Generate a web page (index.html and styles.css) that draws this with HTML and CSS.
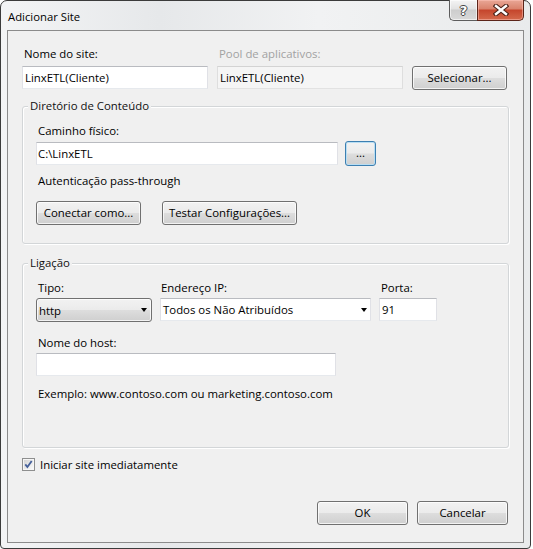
FILE: index.html
```html
<!DOCTYPE html>
<html lang="pt">
<head>
<meta charset="utf-8">
<title>Adicionar Site</title>
<link rel="stylesheet" href="styles.css">
</head>
<body>
<div class="window">
  <div class="titlebar">
    <div class="title">Adicionar Site</div>
    <div class="caption-buttons">
      <div class="cap-btn help"><span class="help-glyph">?</span></div>
      <div class="cap-btn close">
        <svg width="16" height="12" viewBox="0 0 16 12">
          <path d="M3 2 L13 10 M13 2 L3 10" stroke="#4a2118" stroke-width="4.6" stroke-linecap="square" fill="none"/>
          <path d="M3 2 L13 10 M13 2 L3 10" stroke="#ffffff" stroke-width="2.4" stroke-linecap="square" fill="none"/>
        </svg>
      </div>
    </div>
  </div>
  <div class="client">
    <div class="top-grid">
      <div class="lbl">Nome do site:</div>
      <div class="lbl disabled">Pool de aplicativos:</div>
      <div></div>
      <div class="input">LinxETL(Cliente)</div>
      <div class="input readonly">LinxETL(Cliente)</div>
      <div class="btn">Selecionar...</div>
    </div>

    <div class="group g1">
      <div class="group-title">Diretório de Conteúdo</div>
      <div class="lbl l-path">Caminho físico:</div>
      <div class="path-row">
        <div class="input path">C:\LinxETL</div>
        <div class="btn btn-focus browse">...</div>
      </div>
      <div class="lbl auth">Autenticação pass-through</div>
      <div class="btn-row">
        <div class="btn b-conn">Conectar como...</div>
        <div class="btn b-test">Testar Configurações...</div>
      </div>
    </div>

    <div class="group g2">
      <div class="group-title">Ligação</div>
      <div class="ip-grid">
        <div class="lbl">Tipo:</div>
        <div class="lbl lbl-ip">Endereço IP:</div>
        <div class="lbl">Porta:</div>
        <div class="select"><span>http</span><span class="arrow"></span></div>
        <div class="combo"><span>Todos os Não Atribuídos</span><span class="arrow"></span></div>
        <div class="input port">91</div>
      </div>
      <div class="lbl host-label">Nome do host:</div>
      <div class="input host"></div>
      <div class="lbl example">Exemplo: www.contoso.com ou marketing.contoso.com</div>
    </div>

    <div class="check-row">
      <svg class="checkbox" width="13" height="13" viewBox="0 0 13 13">
        <defs>
          <linearGradient id="cbg" x1="0" y1="0" x2="1" y2="1">
            <stop offset="0" stop-color="#d4d4d4"/>
            <stop offset="1" stop-color="#fafafa"/>
          </linearGradient>
        </defs>
        <rect x="0.5" y="0.5" width="12" height="12" fill="#f6f6f6" stroke="#8e8f8f"/>
        <rect x="2" y="2" width="9" height="9" fill="url(#cbg)"/>
        <path d="M3.3 6.4 L5.4 9.1 L9.7 3.1" fill="none" stroke="#45609a" stroke-width="1.8"/>
      </svg>
      <span class="lbl check-label">Iniciar site imediatamente</span>
    </div>

    <div class="footer">
      <div class="btn b-foot">OK</div>
      <div class="btn b-foot">Cancelar</div>
    </div>
  </div>
</div>
</body>
</html>
```

FILE: styles.css
```css
* { box-sizing: border-box; }
html, body { margin: 0; padding: 0; }
body {
  width: 533px;
  height: 549px;
  overflow: hidden;
  background: #ffffff;
  font-family: "Open Sans", "Noto Sans", sans-serif;
  font-size: 11.4px;
  color: #000;
}

.window {
  width: 531px;
  height: 549px;
  border: 1px solid #3b3b3b;
  border-radius: 7px 7px 4px 4px;
  background: linear-gradient(90deg, #f3f4f5 0%, #e6e8ea 30%, #f1f2f3 60%, #e9ebec 100%);
  display: flex;
  flex-direction: column;
}

.titlebar {
  height: 29px;
  flex: none;
  display: flex;
  align-items: flex-start;
}
.title {
  margin: 8px 0 0 7px;
  line-height: 15px;
  font-size: 11.3px;
  color: #000;
}
.caption-buttons {
  margin-left: auto;
  margin-right: 6px;
  margin-top: -1px;
  display: flex;
}
.cap-btn {
  height: 21px;
  display: flex;
  align-items: center;
  justify-content: center;
}
.help {
  width: 28px;
  border: 1px solid #5d5d5d;
  border-top: none;
  border-right: none;
  border-radius: 0 0 0 5px;
  background: linear-gradient(#f4f4f4 0%, #e2e2e2 45%, #cdcdcd 50%, #d9d9d9 100%);
  box-shadow: inset 0 0 0 1px rgba(255,255,255,0.6);
}
.help-glyph {
  font-family: "DejaVu Sans", sans-serif;
  font-weight: bold;
  font-size: 13px;
  line-height: 13px;
  color: #fff;
  text-shadow: 1px 0 0 #444, -1px 0 0 #444, 0 1px 0 #444, 0 -1px 0 #444;
}
.close {
  width: 47px;
  border: 1px solid #5b2419;
  border-top: none;
  border-radius: 0 0 5px 0;
  background: linear-gradient(#e9a796 0%, #d9826c 45%, #c5452c 50%, #d4694c 100%);
  box-shadow: inset 0 0 0 1px rgba(255,200,190,0.5);
}

.client {
  margin: 0 6px;
  height: 513px;
  flex: none;
  border: 1px solid #8b8b8b;
  background: #f0f0f0;
  padding: 15px 14px 0 14px;
}

.lbl {
  line-height: 15px;
  padding-left: 2px;
  color: #000;
  white-space: nowrap;
}
.lbl.disabled { color: #a2a2a2; }

.top-grid {
  display: grid;
  grid-template-columns: 186px 186px 95px;
  column-gap: 9px;
  row-gap: 5px;
  align-items: start;
}

.input {
  height: 23px;
  border: 1px solid;
  border-color: #b9bbc0 #e0e1e6 #e6e9ed #e0e1e6;
  background: #fff;
  padding-left: 2px;
  line-height: 21px;
  white-space: nowrap;
}
.input.readonly {
  background: #f5f5f5;
  border-color: #d3d3d3 #dedede #e2e2e2 #dedede;
}

.btn {
  height: 24px;
  border: 1px solid #707070;
  border-radius: 3px;
  background: linear-gradient(#f2f2f2 0%, #ebebeb 48%, #dddddd 52%, #cfcfcf 100%);
  box-shadow: inset 0 0 0 1px rgba(255,255,255,0.75);
  text-align: center;
  line-height: 22px;
  white-space: nowrap;
}
.btn-focus {
  border-color: #3c7fb1;
  box-shadow: inset 0 0 0 1px #b9def3;
}

.group {
  border: 1px solid #d3d6d8;
  border-radius: 3px;
  box-shadow: inset 1px 1px 0 #fff, 1px 1px 0 #fff;
  padding: 0 13px;
}
.group-title {
  width: max-content;
  margin: -9px 0 0 -8px;
  padding: 0 2px;
  background: #f0f0f0;
  line-height: 16px;
  color: #111;
}

.g1 { margin-top: 16px; padding-bottom: 18px; }
.l-path { margin-top: 9px; }
.path-row {
  margin-top: 3px;
  height: 25px;
  display: flex;
  align-items: center;
  gap: 7px;
}
.input.path { width: 302px; padding-left: 1px; }
.browse { width: 31px; height: 25px; line-height: 21px; }
.auth { margin-top: 7px; }
.btn-row {
  margin-top: 13px;
  display: flex;
  gap: 21px;
}
.b-conn { width: 105px; }
.b-test { width: 135px; }

.g2 { margin-top: 19px; padding-bottom: 46px; }
.ip-grid {
  margin-top: 9px;
  display: grid;
  grid-template-columns: 116px 211px 58px;
  column-gap: 8px;
  row-gap: 3px;
  align-items: start;
}
.lbl-ip { padding-left: 1px; }
.select {
  height: 24px;
  border: 1px solid #707070;
  border-radius: 3px;
  background: linear-gradient(#f2f2f2 0%, #ebebeb 48%, #dddddd 52%, #cfcfcf 100%);
  box-shadow: inset 0 0 0 1px rgba(255,255,255,0.75);
  display: flex;
  align-items: center;
  justify-content: space-between;
  padding: 0 4px 0 2px;
}
.combo {
  height: 23px;
  border: 1px solid;
  border-color: #b9bbc0 #e0e1e6 #e6e9ed #e0e1e6;
  background: #fff;
  display: flex;
  align-items: center;
  justify-content: space-between;
  padding: 0 3px 0 2px;
  white-space: nowrap;
}
.arrow {
  width: 0;
  height: 0;
  border-left: 3.5px solid transparent;
  border-right: 3.5px solid transparent;
  border-top: 4px solid #000;
}
.input.port { padding-left: 2px; }

.host-label { margin-top: 13px; }
.input.host { margin-top: 3px; width: 300px; }
.example { margin-top: 10px; }

.check-row {
  margin-top: 9px;
  height: 15px;
  display: flex;
  align-items: center;
  gap: 5px;
}
.checkbox { flex: none; }
.check-label { padding-left: 0; }

.footer {
  margin-top: 29px;
  display: flex;
  justify-content: flex-end;
  gap: 9px;
  padding-right: 1px;
}
.b-foot { width: 91px; }
```
